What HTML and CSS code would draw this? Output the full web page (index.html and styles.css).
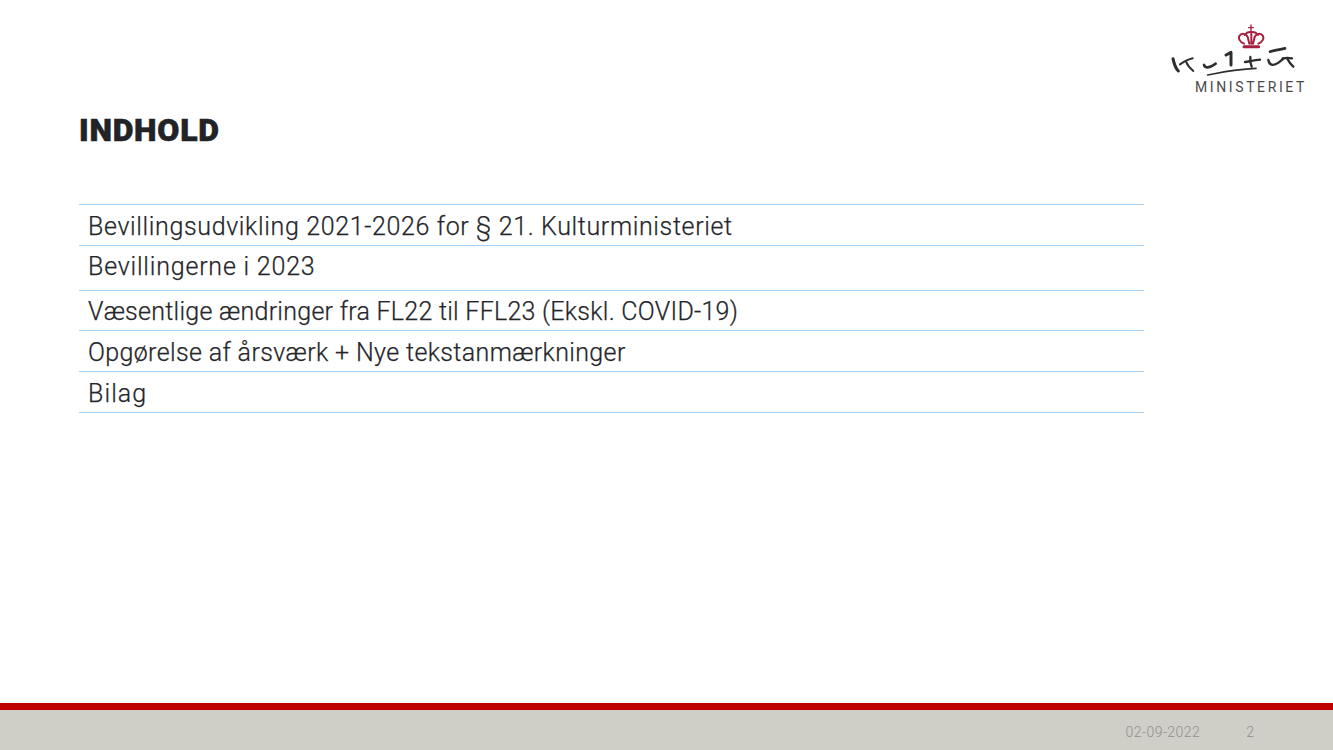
FILE: index.html
```html
<!DOCTYPE html>
<html lang="da">
<head>
<meta charset="utf-8">
<title>Indhold</title>
<link rel="stylesheet" href="styles.css">
</head>
<body>
<div class="slide">
  <header class="top">
    <div class="logo">
      <svg class="logo-mark" width="170" height="70" viewBox="0 0 510 210" aria-hidden="true">
        <g fill="none" stroke="#a6203f" stroke-linecap="round" stroke-linejoin="round">
          <path stroke-width="4" d="M303 30V50M296 38H310"/>
          <path stroke-width="6" d="M282 86C270 80 264 72 268 63C274 53 288 55 293 66L298 86M325 86C337 80 343 72 339 63C333 53 319 55 314 66L309 86M304 52V86M284 60C290 52 297 50 304 52C311 50 318 52 324 60"/>
          <path stroke-width="9" d="M282 95H326"/>
        </g>
        <g fill="none" stroke="#2f2e2d" stroke-linecap="round" stroke-linejoin="round">
          <path stroke-width="9" d="M69 131C72 146 77 160 85 168"/>
          <path stroke-width="6" d="M90 148C102 140 115 133 128 130M108 140C112 150 120 160 130 168"/>
          <path stroke-width="8" d="M162 150C166 160 178 160 197 146"/>
          <path stroke-width="9" d="M228 120L243 112V150"/>
          <path stroke-width="5" d="M173 180C215 172 250 163 318 160"/>
          <path stroke-width="7" d="M285 141C298 139 315 136 330 134"/>
          <path stroke-width="7" d="M301 126C300 136 301 146 305 155"/>
          <path stroke-width="7" d="M355 135C358 152 372 158 400 131"/>
          <path stroke-width="8" d="M360 110C375 106 390 103 405 100"/>
          <path stroke-width="7" d="M398 130C408 128 416 128 426 130M411 130C416 140 422 148 430 155"/>
        </g>
      </svg>
      <div class="logo-word">MINISTERIET</div>
    </div>
  </header>
  <main class="content">
    <h1 class="title">INDHOLD</h1>
    <ul class="toc">
      <li class="toc-row toc-row-a">Bevillingsudvikling 2021-2026 for § 21. Kulturministeriet</li>
      <li class="toc-row toc-row-b">Bevillingerne i 2023</li>
      <li class="toc-row toc-row-c">Væsentlige ændringer fra FL22 til FFL23 (Ekskl. COVID-19)</li>
      <li class="toc-row toc-row-d">Opgørelse af årsværk + Nye tekstanmærkninger</li>
      <li class="toc-row toc-row-e">Bilag</li>
    </ul>
  </main>
  <footer class="footer">
    <span class="footer-date">02-09-2022</span>
    <span class="footer-page">2</span>
  </footer>
</div>
</body>
</html>
```
FILE: styles.css
```css
* { box-sizing: border-box; }
html, body { margin: 0; padding: 0; background: #fff; }
.slide {
  width: 1333px;
  height: 750px;
  display: flex;
  flex-direction: column;
  overflow: hidden;
  font-family: "Roboto", "Liberation Sans", sans-serif;
  color: #25262a;
}
.top {
  height: 96px;
  display: flex;
  justify-content: flex-end;
  align-items: flex-start;
  padding: 15px 13px 0 0;
}
.logo { width: 170px; }
.logo-mark { display: block; }
.logo-word {
  margin-top: -6px;
  padding-left: 45px;
  font-size: 14px;
  font-weight: 400;
  line-height: 16px;
  letter-spacing: 2.6px;
  color: #4a4a4a;
  white-space: nowrap;
}
.content { flex: 1; padding: 0 0 0 79px; }
.title {
  margin: 0;
  font-size: 32px;
  font-weight: 900;
  line-height: 40px;
  height: 108px;
  padding-top: 14px;
  letter-spacing: 0.75px;
  -webkit-text-stroke: 0.6px #222327;
  color: #222327;
}
.toc {
  list-style: none;
  margin: 0;
  padding: 0;
  width: 1065px;
  border-top: 1px solid #a9d1f7;
}
.toc-row {
  height: 41px;
  padding: 7px 0 0 9px;
  font-size: 25px;
  font-weight: 300;
  line-height: 30px;
  -webkit-text-stroke: 0.25px #25262a;
  border-bottom: 1px solid #a9d1f7;
  white-space: nowrap;
}
.toc-row-a { letter-spacing: 0.64px; }
.toc-row-b { height: 45px; padding-top: 6px; letter-spacing: 0.8px; }
.toc-row-c { height: 40px; padding-top: 6px; letter-spacing: 0.27px; }
.toc-row-d { letter-spacing: 0.37px; }
.toc-row-e { letter-spacing: 1.1px; }
.footer {
  height: 47px;
  display: flex;
  justify-content: flex-end;
  align-items: center;
  border-top: 7px solid #c00000;
  background: #d0cfc7;
  color: #8f8f8f;
  font-size: 14px;
  font-weight: 300;
  padding: 3px 79px 0 0;
}
.footer-date { letter-spacing: 0.45px; }
.footer-page { margin-left: 46px; }
```
